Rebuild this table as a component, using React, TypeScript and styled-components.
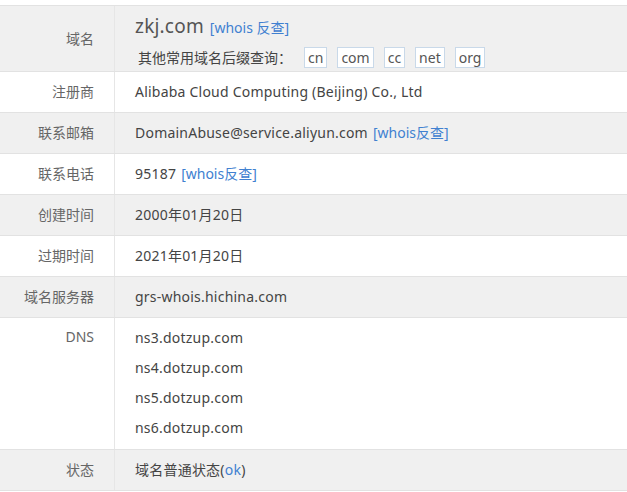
import React from "react";
import styled, { createGlobalStyle } from "styled-components";

const Global = createGlobalStyle`
  html, body { margin: 0; padding: 0; background: #fff; }
  body { font-family: "Noto Sans", "Noto Sans CJK SC", sans-serif; }
`;

const Page = styled.div`
  padding-top: 5px;
  width: 627px;
`;

const Table = styled.div`
  display: flex;
  flex-direction: column;
  border-top: 1px solid #e2e2e2;
`;

const Row = styled.div<{ $gray?: boolean; $h?: number }>`
  display: grid;
  grid-template-columns: 115px 1fr;
  background: ${(p) => (p.$gray ? "#f0f0f0" : "#fff")};
  border-bottom: 1px solid #e2e2e2;
  min-height: ${(p) => (p.$h ?? 40)}px;
`;

const Label = styled.div<{ $top?: boolean }>`
  border-right: 1px solid #e6e6e6;
  display: flex;
  justify-content: flex-end;
  align-items: ${(p) => (p.$top ? "flex-start" : "center")};
  padding: ${(p) => (p.$top ? "9px 20px 0 0" : "0 20px 2px 0")};
  font-size: 14px;
  color: #666;
`;

const Value = styled.div<{ $pt?: number; $pb?: number }>`
  display: flex;
  flex-direction: column;
  justify-content: center;
  padding-left: 20px;
  padding-top: ${(p) => p.$pt ?? 0}px;
  padding-bottom: ${(p) => p.$pb ?? 2}px;
  font-size: 14px;
  color: #444;
  letter-spacing: 0.22px;
`;

const Link = styled.a`
  color: #4080d0;
  text-decoration: none;
  margin-left: 5px;
  letter-spacing: 0;
`;

const Domain = styled.div`
  font-size: 19px;
  color: #555;
  line-height: 24px;
  letter-spacing: 0.2px;
`;

const DomainLink = styled(Link)`
  font-size: 14px;
  margin-left: 6px;
`;

const Suffixes = styled.div`
  display: flex;
  align-items: center;
  font-size: 14px;
  color: #444;
  letter-spacing: 0;
  margin-top: 7px;
  margin-left: 3px;
`;

const SuffixTag = styled.span`
  border: 1px solid #c9d9e9;
  background: #fff;
  color: #555;
  font-size: 14px;
  line-height: 19px;
  padding: 0 3px;
  margin-left: 10px;
  &:first-of-type { margin-left: 12px; }
`;

const DnsList = styled.div`
  display: flex;
  flex-direction: column;
  padding: 5px 0 6px 20px;
  font-size: 14px;
  color: #444;
  letter-spacing: 0.22px;
`;

const DnsLine = styled.div`
  line-height: 30px;
`;

const Ok = styled.span`
  color: #4080d0;
`;

export default function App() {
  return (
    <Page>
      <Global />
      <Table>
        <Row $gray $h={65}>
          <Label>域名</Label>
          <Value $pt={4} $pb={0}>
            <Domain>
              zkj.com<DomainLink href="#">[whois 反查]</DomainLink>
            </Domain>
            <Suffixes>
              其他常用域名后缀查询：
              {["cn", "com", "cc", "net", "org"].map((s) => (
                <SuffixTag key={s}>{s}</SuffixTag>
              ))}
            </Suffixes>
          </Value>
        </Row>
        <Row>
          <Label>注册商</Label>
          <Value>Alibaba Cloud Computing (Beijing) Co., Ltd</Value>
        </Row>
        <Row $gray>
          <Label>联系邮箱</Label>
          <Value>
            <span>
              DomainAbuse@service.aliyun.com<Link href="#">[whois反查]</Link>
            </span>
          </Value>
        </Row>
        <Row>
          <Label>联系电话</Label>
          <Value>
            <span>
              95187<Link href="#">[whois反查]</Link>
            </span>
          </Value>
        </Row>
        <Row $gray>
          <Label>创建时间</Label>
          <Value>2000年01月20日</Value>
        </Row>
        <Row>
          <Label>过期时间</Label>
          <Value>2021年01月20日</Value>
        </Row>
        <Row $gray>
          <Label>域名服务器</Label>
          <Value>grs-whois.hichina.com</Value>
        </Row>
        <Row $h={130}>
          <Label $top>DNS</Label>
          <DnsList>
            <DnsLine>ns3.dotzup.com</DnsLine>
            <DnsLine>ns4.dotzup.com</DnsLine>
            <DnsLine>ns5.dotzup.com</DnsLine>
            <DnsLine>ns6.dotzup.com</DnsLine>
          </DnsList>
        </Row>
        <Row $gray>
          <Label>状态</Label>
          <Value>
            <span>
              域名普通状态(<Ok>ok</Ok>)
            </span>
          </Value>
        </Row>
      </Table>
    </Page>
  );
}
